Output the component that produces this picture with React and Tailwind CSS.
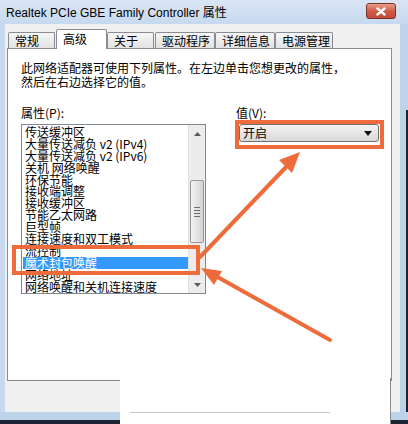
const cjk = "font-['Noto_Sans_CJK_SC','Noto_Sans',sans-serif]";

const tabs = [
  { label: '常规', w: 'w-[47px]', ml: '' },
  { label: '高级', w: 'w-[51px]', ml: 'ml-[1px]', active: true },
  { label: '关于', w: 'w-[47px]', ml: '' },
  { label: '驱动程序', w: 'w-[60px]', ml: 'ml-[1px]' },
  { label: '详细信息', w: 'w-[60px]', ml: '' },
  { label: '电源管理', w: 'w-[58px]', ml: '' },
];

const items = [
  '传送缓冲区',
  '大量传送减负 v2 (IPv4)',
  '大量传送减负 v2 (IPv6)',
  '关机 网络唤醒',
  '环保节能',
  '接收端调整',
  '接收缓冲区',
  '节能乙太网路',
  '巨型帧',
  '连接速度和双工模式',
  '流控制',
  '魔术封包唤醒',
  '网络地址',
  '网络唤醒和关机连接速度',
];

function Tab({ label, w, ml, active }) {
  if (active) {
    return (
      <div className={`${w} ${ml} relative z-10 h-[20px] -mb-[1px] bg-white border border-b-0 border-[#898c95] rounded-t-[2px] pl-[6px] text-[12px] leading-[18px] text-black`}>
        {label}
      </div>
    );
  }
  return (
    <div className={`${w} ${ml} h-[16px] bg-gradient-to-b from-[#f6f6f6] to-[#e2e2e2] border border-b-0 border-[#898c95] rounded-t-[2px] pl-[6px] text-[12px] leading-[15px] text-black`}>
      {label}
    </div>
  );
}

function Scrollbar() {
  return (
    <div className="w-[17px] flex flex-col bg-[#ececec] border-l border-[#e2e2e2]">
      <div className="h-[17px] flex items-center justify-center">
        <svg width="7" height="4" viewBox="0 0 7 4"><path d="M0 4 L3.5 0 L7 4 Z" fill="#5a5a5a" /></svg>
      </div>
      <div className="mt-[38px] mx-[1px] h-[63px] rounded-[2px] border border-[#979797] bg-gradient-to-r from-[#f3f3f3] to-[#d4d4d4] flex flex-col items-center justify-center gap-[2px]">
        <div className="w-[6px] h-[1px] bg-[#6e6e6e]" />
        <div className="w-[6px] h-[1px] bg-[#6e6e6e]" />
        <div className="w-[6px] h-[1px] bg-[#6e6e6e]" />
        <div className="w-[6px] h-[1px] bg-[#6e6e6e]" />
      </div>
      <div className="flex-1" />
      <div className="h-[17px] flex items-center justify-center">
        <svg width="7" height="4" viewBox="0 0 7 4"><path d="M0 0 L3.5 4 L7 0 Z" fill="#5a5a5a" /></svg>
      </div>
    </div>
  );
}

export default function App() {
  return (
    <div className={`relative w-[408px] h-[424px] overflow-hidden bg-[#c6d9ef] ${cjk}`}>
      {/* title bar */}
      <div className="h-[24px] flex items-center justify-between pl-[6px] pr-[12px] bg-gradient-to-b from-[#dae6f4] to-[#c6d9ef]">
        <span className="text-[12px] text-black font-['Liberation_Sans','Noto_Sans_CJK_SC',sans-serif] pt-[1px]">
          Realtek PCIe GBE Family Controller 属性
        </span>
        <div className="w-[30px] h-[16px] -mt-[2px] rounded-[3px] border border-[#7b3328] bg-gradient-to-b from-[#e7a08f] via-[#cf5a48] to-[#c24a38] flex items-center justify-center">
          <svg width="10" height="9" viewBox="0 0 10 9">
            <path d="M1.5 1.5 L8.5 7.5 M8.5 1.5 L1.5 7.5" stroke="#fff" strokeWidth="2.4" strokeLinecap="round" />
          </svg>
        </div>
      </div>

      <div className="flex h-[388px]">
        <div className="w-[5px] bg-[#c6d9ef]" />
        <div className="flex-1 flex flex-col bg-[#f0f0f0]">
          {/* tabs */}
          <div className="h-[24px] flex items-end pl-[3px]">
            {tabs.map((t) => (
              <Tab key={t.label} {...t} />
            ))}
          </div>

          {/* panel */}
          <div className="ml-[2px] w-[385px] h-[333px] bg-white border border-[#898c95] pt-[12px] pl-[13px]">
            <p className="text-[12px] leading-[14px] text-black">
              此网络适配器可使用下列属性。在左边单击您想更改的属性，
              <br />
              然后在右边选择它的值。
            </p>

            <div className="flex mt-[17px]">
              <div className="w-[185px]">
                <div className="text-[12px] leading-[14px] text-black">属性(P):</div>
                <div className="mt-[4px] h-[170px] border border-[#828790] flex">
                  <div className="flex-1 pt-[1px] pl-[1px]">
                    {items.map((it, i) => (
                      <div
                        key={it}
                        className={
                          i === 11
                            ? 'h-[11.9px] leading-[11.9px] text-[12px] pl-[2px] bg-[#3399ff] text-white whitespace-nowrap'
                            : 'h-[11.9px] leading-[11.9px] text-[12px] pl-[2px] text-black whitespace-nowrap'
                        }
                      >
                        {it}
                      </div>
                    ))}
                  </div>
                  <Scrollbar />
                </div>
              </div>

              <div className="ml-[30px]">
                <div className="text-[12px] leading-[14px] text-black">值(V):</div>
                <div className="mt-[4px] ml-[3px] w-[140px] h-[18px] rounded-[3px] border border-[#707070] bg-gradient-to-b from-[#f3f3f3] to-[#d9d9d9] flex items-center justify-between pl-[3px] pr-[6px]">
                  <span className="text-[12px] leading-[14px] text-black">开启</span>
                  <svg width="8" height="5" viewBox="0 0 8 5"><path d="M0 0 L8 0 L4 5 Z" fill="#111" /></svg>
                </div>
              </div>
            </div>
          </div>
          <div className="flex-1" />
        </div>
        <div className="w-[8px] flex">
          <div className="w-[6px] bg-[#bcd3ea]" />
          <div className="w-[2px] flex flex-col">
            <div className="h-[86px] bg-[#bcd3ea]" />
            <div className="flex-1 bg-[#1c2333]" />
          </div>
        </div>
      </div>
      <div className="h-[8px] bg-[#bcd3ea]" />
      <div className="h-[4px] bg-[#1c2333]" />

      {/* erased patch at the bottom */}
      <div className="absolute left-[120px] top-[378px] w-[271px] h-[46px] bg-white border-r border-[#8a8a8a]">
        <div className="mt-[34px] ml-[10px] w-[200px] h-[1px] bg-[#c8c8c8]" />
      </div>

      {/* annotations */}
      <svg className="absolute inset-0 pointer-events-none" width="408" height="424" viewBox="0 0 408 424">
        <g stroke="#ee6c3c" fill="none" strokeWidth="4">
          <rect x="237" y="122" width="145" height="25" />
          <rect x="14" y="247" width="184" height="26" />
        </g>
        <g stroke="#ee6c3c" strokeWidth="4" strokeLinecap="round">
          <line x1="200" y1="257" x2="288" y2="165" />
          <line x1="330" y1="340" x2="214" y2="275" />
        </g>
        <g fill="#ee6c3c">
          <polygon points="300,152 279,160 292,173" />
          <polygon points="201,268 222,271 214,285" />
        </g>
      </svg>
    </div>
  );
}
